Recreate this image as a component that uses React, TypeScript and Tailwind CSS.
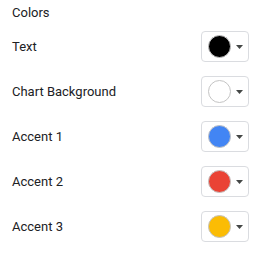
const rows = [
  { label: "Text", color: "bg-[#000000]" },
  { label: "Chart Background", color: "bg-[#ffffff]" },
  { label: "Accent 1", color: "bg-[#4285f4]" },
  { label: "Accent 2", color: "bg-[#ea4335]" },
  { label: "Accent 3", color: "bg-[#fbbc04]" },
];

function Swatch({ color }: { color: string }) {
  return (
    <button className="flex h-[31px] w-[48px] items-center rounded-[4px] border border-[#dadce0] bg-white pl-[6px]">
      <span className={`h-[23px] w-[23px] rounded-full border border-[#c4c4c4] ${color}`} />
      <svg className="ml-[5px]" width="7" height="4" viewBox="0 0 7 4">
        <path d="M0 0h7L3.5 4z" fill="#444746" />
      </svg>
    </button>
  );
}

export default function App() {
  return (
    <div className="w-[273px] h-[253px] bg-white pl-3 pr-6 font-['Roboto',sans-serif] text-[13px] text-[#202124]">
      <div className="h-[24px] pt-[5px] leading-4">Colors</div>
      {rows.map((r) => (
        <div key={r.label} className="flex h-[45px] items-center justify-between">
          <span>{r.label}</span>
          <Swatch color={r.color} />
        </div>
      ))}
    </div>
  );
}
